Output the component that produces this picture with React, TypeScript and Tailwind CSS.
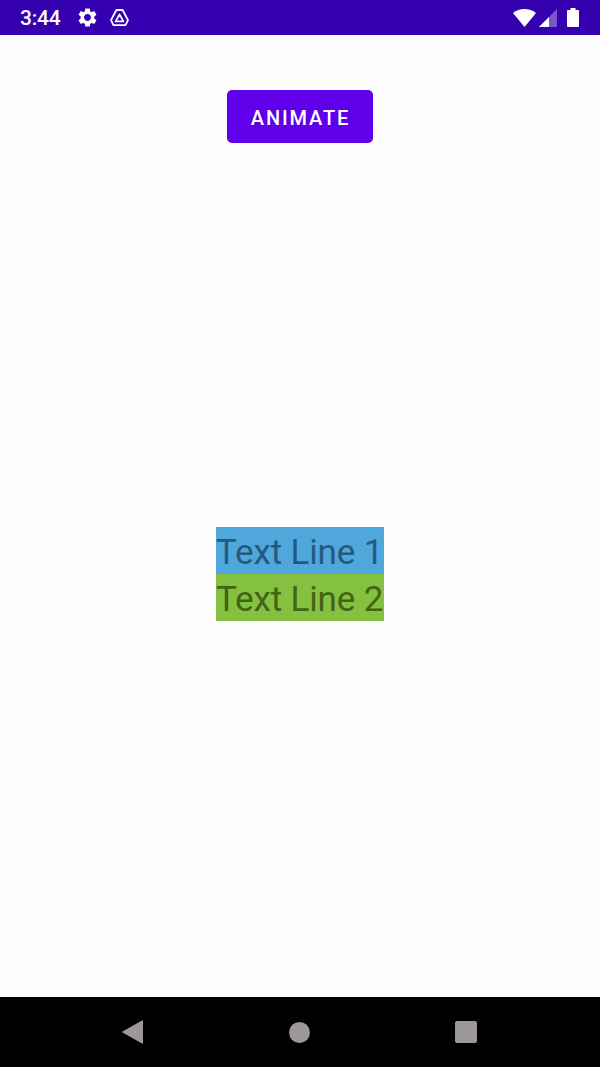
import React from "react";

function StatusBar() {
  return (
    <header className="flex h-[35px] shrink-0 items-center bg-[#3500b0] pl-[20px] pr-[21px] text-white">
      <span className="w-[58px] pt-[2px] text-[21px] font-medium leading-[35px] tracking-[-0.2px]">3:44</span>
      <svg className="mr-[13px] h-[19px] w-[19px]" viewBox="2 2 20 20" fill="currentColor">
        <path d="M19.14 12.94c.04-.3.06-.61.06-.94 0-.32-.02-.64-.07-.94l2.03-1.58a.49.49 0 0 0 .12-.61l-1.92-3.32a.488.488 0 0 0-.59-.22l-2.39.96c-.5-.38-1.03-.7-1.62-.94l-.36-2.54a.484.484 0 0 0-.48-.41h-3.84c-.24 0-.43.17-.47.41l-.36 2.54c-.59.24-1.13.57-1.62.94l-2.39-.96c-.22-.08-.47 0-.59.22L2.74 8.87c-.12.21-.08.47.12.61l2.03 1.58c-.05.3-.09.63-.09.94s.02.64.07.94l-2.03 1.58a.49.49 0 0 0-.12.61l1.92 3.32c.12.22.37.29.59.22l2.39-.96c.5.38 1.03.7 1.62.94l.36 2.54c.05.24.24.41.48.41h3.84c.24 0 .44-.17.47-.41l.36-2.54c.59-.24 1.13-.56 1.62-.94l2.39.96c.22.08.47 0 .59-.22l1.92-3.32c.12-.22.07-.47-.12-.61l-2.01-1.58zM12 15.6c-1.98 0-3.6-1.62-3.6-3.6s1.62-3.6 3.6-3.6 3.6 1.62 3.6 3.6-1.62 3.6-3.6 3.6z" />
      </svg>
      <svg className="h-[18px] w-[19px]" viewBox="0 0 19 18" fill="none" stroke="currentColor" strokeWidth="1.8" strokeLinejoin="round">
        <path d="M6.400 1h6.200l5.400 10.200-2.500 4.900h-12L1 11.200z" />
        <path d="M9.500 5.500l3.900 6.900H5.600z" />
      </svg>
      <div className="ml-auto flex items-center">
        <svg className="h-[18px] w-[23px]" viewBox="0 0 23 18" fill="currentColor">
          <path d="M0 4Q5 0 11.500 0T23 4L11.500 18z" />
        </svg>
        <svg className="ml-[3px] h-[18px] w-[18px]" viewBox="0 0 18 18">
          <path d="M18 0v18H0z" fill="#7a55cd" />
          <path d="M10 8v10H0z" fill="#fff" />
        </svg>
        <svg className="ml-[10px] h-[19px] w-[12px]" viewBox="0 0 12 19" fill="currentColor">
          <path d="M3.500 0h5v2H11q1 0 1 1v15q0 1-1 1H1q-1 0-1-1V3q0-1 1-1h2.500z" />
        </svg>
      </div>
    </header>
  );
}

function NavigationBar() {
  return (
    <nav className="flex h-[70px] shrink-0 items-center justify-between bg-black pl-[122px] pr-[123px] text-[#9b979b]">
      <svg className="h-[24px] w-[21px]" viewBox="0 0 21 24" fill="currentColor">
        <path d="M20 .5q1-.5 1 .5v22q0 1-1 .5L.5 12.600q-.8-.6 0-1.200z" />
      </svg>
      <span className="h-[21px] w-[21px] rounded-full bg-[#9b979b]" />
      <span className="h-[22px] w-[22px] rounded-[2px] bg-[#9b979b]" />
    </nav>
  );
}

export default function App() {
  return (
    <div className="flex h-[1067px] w-[600px] flex-col overflow-hidden bg-[#fefdfe] font-['Roboto',sans-serif]">
      <StatusBar />
      <main className="flex flex-1 flex-col items-center pt-[55px]">
        <button className="h-[53px] w-[146px] rounded-[5px] bg-[#6000ea] pl-[1px] pt-[2px] text-[20px] font-medium tracking-[1.85px] text-white">
          ANIMATE
        </button>
        <div className="mt-[384px] w-[168px] whitespace-nowrap text-[35px] leading-[47px] tracking-[-0.15px]">
          <p className="h-[47px] bg-[#50a7dc] pt-[2px] text-[#245a80]">Text Line 1</p>
          <p className="h-[47px] bg-[#85c140] pt-[2px] text-[#436414]">Text Line 2</p>
        </div>
      </main>
      <NavigationBar />
    </div>
  );
}
